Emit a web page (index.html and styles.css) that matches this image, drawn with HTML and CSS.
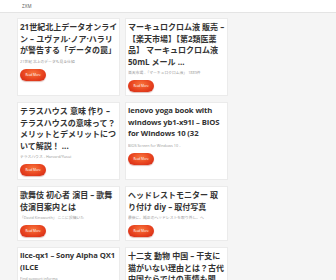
FILE: index.html
```html
<!DOCTYPE html>
<html lang="ja">
<head>
    <meta charset="UTF-8">
    <meta name="viewport" content="width=device-width, initial-scale=1.0">
    <title>ZXM</title>
    <link rel="stylesheet" href="styles.css">
</head>
<body>

    <div class="header">
        <span class="logo">ZXM</span>
    </div>

    <div class="posts">
        <div class="card">
            <h2 class="title">21世紀北上データオンライ<br>ン – ユヴァル·ノア·ハラリ<br>が警告する「データの罠」</h2>
            <p class="meta">21世紀 北上のデータも見る仕組</p>
            <a class="more" href="#">Read More</a>
        </div>
        <div class="card">
            <h2 class="title">マーキュロクロム液 販売 – <br>【楽天市場】【第2類医薬<br>品】 マーキュロクロム液 50mL メール ...</h2>
            <p class="meta">楽天市場 -「マーキュロクロム液」 1889件</p>
            <a class="more" href="#">Read More</a>
        </div>
        <div class="card">
            <h2 class="title">テラスハウス 意味 作り – <br>テラスハウスの意味って？メリットとデメリットについて解説！ ...</h2>
            <p class="meta">テラスハウス - Harvard/Yusui</p>
            <a class="more" href="#">Read More</a>
        </div>
        <div class="card">
            <h2 class="title en">lenovo yoga book with windows yb1-x91l – BIOS for Windows 10 (32</h2>
            <p class="meta">BIOS Screen for Windows 10 -</p>
            <a class="more" href="#">Read More</a>
        </div>
        <div class="card">
            <h2 class="title">歌舞伎 初心者 演目 – 歌舞<br>伎演目案内とは</h2>
            <p class="meta">「David Kinsworth」 ここに投稿いた</p>
            <a class="more" href="#">Read More</a>
        </div>
        <div class="card">
            <h2 class="title">ヘッドレストモニター 取<br>り付け diy – 取付写真</h2>
            <p class="meta">最後に、純正のヘッドレストを取り外し、ヘ</p>
            <a class="more" href="#">Read More</a>
        </div>
        <div class="card">
            <h2 class="title en">ilce-qx1 – Sony Alpha QX1 (ILCE</h2>
            <p class="meta">Find support informa</p>
            <a class="more" href="#">Read More</a>
        </div>
        <div class="card">
            <h2 class="title">十二支 動物 中国 – 干支に<br>猫がいない理由とは？古代<br>中国ならではの事情も関</h2>
            <p class="meta">十二支の動物</p>
            <a class="more" href="#">Read More</a>
        </div>
    </div>

</body>
</html>
```

FILE: styles.css
```css
body {
    margin: 0;
    background-color: #f5f5f5;
    font-family: "Open Sans", "Noto Sans CJK JP", sans-serif;
    color: #333;
}

.header {
    height: 12px;
    background-color: #ffffff;
    border-bottom: 1px solid #e4e4e4;
    padding-left: 22px;
    display: flex;
    align-items: center;
}

.logo {
    font-size: 4.5px;
    color: #555;
    letter-spacing: 0.2px;
}

.posts {
    display: grid;
    grid-template-columns: 103px 103px;
    gap: 6px 5px;
    padding: 5px 0 0 17px;
}

.card {
    background-color: #ffffff;
    border: 1px solid #ebebeb;
    padding: 2px 0 3px 2px;
}

.title {
    margin: 0;
    font-size: 8px;
    line-height: 11.5px;
    font-weight: 700;
    color: #333;
}

/* latin titles run a bit tighter */
.title.en {
    font-size: 7.7px;
    letter-spacing: -0.1px;
}

.meta {
    margin: 3px 0 0;
    font-size: 3.8px;
    line-height: 5px;
    color: #999;
    white-space: nowrap;
    overflow: hidden;
}

.more {
    display: flex;
    justify-content: center;
    align-items: center;
    width: 26px;
    height: 12px;
    margin-top: 5px;
    border-radius: 7px;
    background: radial-gradient(ellipse at 50% 35%, #f8743c 0%, #e8441f 55%, #cf2414 100%);
    color: #fff;
    font-size: 3px;
    text-decoration: none;
    box-shadow: 0 1px 1px rgba(150, 30, 10, 0.3);
}
```
